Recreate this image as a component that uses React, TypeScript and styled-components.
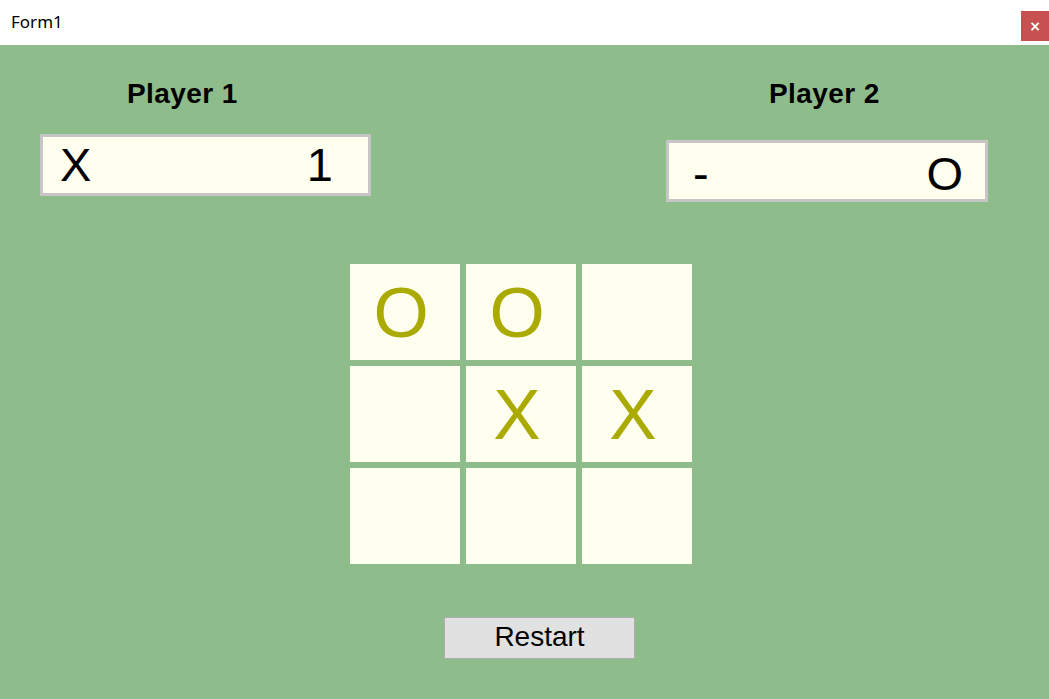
import React, { useState } from "react";
import styled, { createGlobalStyle } from "styled-components";

const green = "#8FBC8B";
const ivory = "#FFFFF0";
const olive = "#AAAA00";

const Global = createGlobalStyle`
  html, body {
    margin: 0;
    padding: 0;
    height: 100%;
    background: ${green};
  }
  #root {
    height: 100%;
  }
  * {
    box-sizing: border-box;
  }
`;

const Window = styled.div`
  display: flex;
  flex-direction: column;
  height: 100vh;
  font-family: "Liberation Sans", Arial, sans-serif;
`;

const TitleBar = styled.div`
  height: 45px;
  background: white;
  display: flex;
  align-items: flex-start;
  justify-content: space-between;
  flex-shrink: 0;
`;

const Title = styled.span`
  font-family: "Noto Sans", "Liberation Sans", sans-serif;
  font-size: 17px;
  color: #000;
  margin: 10px 0 0 11px;
`;

const CloseButton = styled.div`
  width: 28px;
  height: 30px;
  margin-top: 11px;
  background: #c75050;
  color: white;
  font-family: "DejaVu Sans", sans-serif;
  font-weight: bold;
  font-size: 14px;
  display: flex;
  align-items: center;
  justify-content: center;
`;

const Content = styled.div`
  flex: 1;
  background: ${green};
  display: flex;
  flex-direction: column;
  padding-top: 35px;
`;

const PlayersRow = styled.div`
  display: flex;
  justify-content: space-between;
  align-items: flex-start;
  padding: 0 61px 0 40px;
`;

const Panel = styled.div<{ $width: number }>`
  width: ${(p) => p.$width}px;
  display: flex;
  flex-direction: column;
`;

const PlayerLabel = styled.div<{ $indent: number }>`
  font-weight: bold;
  font-size: 28px;
  line-height: 28px;
  letter-spacing: 0.4px;
  color: #000;
  margin-left: ${(p) => p.$indent}px;
`;

const ScoreBox = styled.div<{ $top: number; $pad: string }>`
  margin-top: ${(p) => p.$top}px;
  height: 62px;
  border: 3px solid #c6c6c6;
  background: ${ivory};
  display: flex;
  align-items: center;
  justify-content: space-between;
  padding: ${(p) => p.$pad};
  font-size: 47px;
  color: #000;
`;

const Board = styled.div`
  display: grid;
  grid-template-columns: repeat(3, 110px);
  grid-template-rows: repeat(3, 96px);
  gap: 6px;
  margin: 62px 0 0 350px;
  width: max-content;
`;

const Cell = styled.div`
  background: ${ivory};
  display: flex;
  align-items: center;
  justify-content: center;
  padding-right: 8px;
  font-size: 71px;
  color: ${olive};
  cursor: pointer;
  user-select: none;
`;

const RestartButton = styled.button`
  margin: 53px 0 0 444px;
  width: 191px;
  height: 42px;
  background: #e1e1e1;
  border: 1px solid #adadad;
  font-family: "Liberation Sans", Arial, sans-serif;
  font-size: 28px;
  color: #000;
  padding: 0 0 2px 0;
  cursor: pointer;
`;

const initial = ["O", "O", "", "", "X", "X", "", "", ""];

export default function App() {
  const [cells, setCells] = useState<string[]>(initial);

  return (
    <>
      <Global />
      <Window>
        <TitleBar>
          <Title>Form1</Title>
          <CloseButton>×</CloseButton>
        </TitleBar>
        <Content>
          <PlayersRow>
            <Panel $width={331}>
              <PlayerLabel $indent={87}>Player 1</PlayerLabel>
              <ScoreBox $top={26} $pad="0 35px 2px 17px">
                <span>X</span>
                <span>1</span>
              </ScoreBox>
            </Panel>
            <Panel $width={322}>
              <PlayerLabel $indent={103}>Player 2</PlayerLabel>
              <ScoreBox $top={32} $pad="4px 22px 0 24px">
                <span>-</span>
                <span>O</span>
              </ScoreBox>
            </Panel>
          </PlayersRow>
          <Board>
            {cells.map((c, i) => (
              <Cell key={i}>{c}</Cell>
            ))}
          </Board>
          <RestartButton onClick={() => setCells(Array(9).fill(""))}>Restart</RestartButton>
        </Content>
      </Window>
    </>
  );
}
